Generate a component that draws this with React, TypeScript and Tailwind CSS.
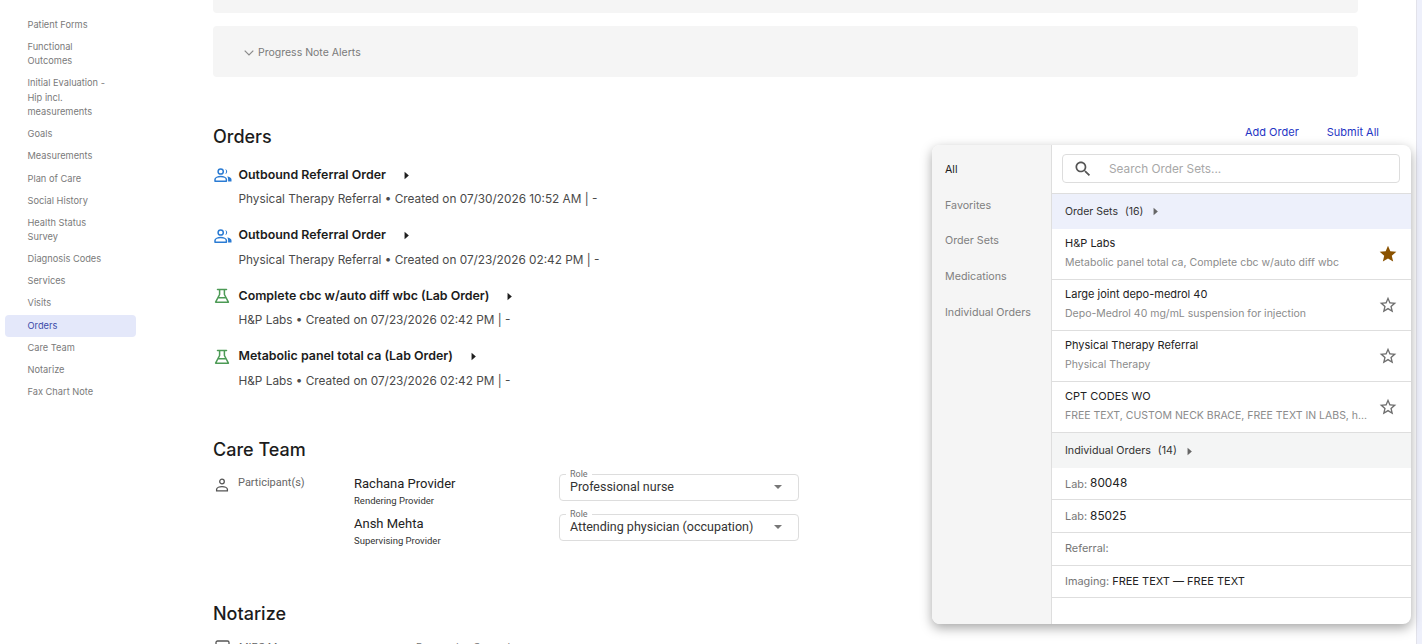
import React from "react";

const font = { fontFamily: "Inter, 'Liberation Sans', sans-serif" };

function PeopleIcon() {
  return (
    <svg width="18" height="14" viewBox="0 0 18 14" fill="none" className="shrink-0">
      <circle cx="6.7" cy="3.5" r="2.6" stroke="#2a7bd3" strokeWidth="1.5" />
      <path d="M1 13.2v-1.600c0-1.900 3-3 5.700-3s5.700 1.100 5.700 3v1.600z" stroke="#2a7bd3" strokeWidth="1.500" strokeLinejoin="round" />
      <path d="M11.200.9a2.700 2.700 0 0 1 0 5.200c.6-.8.9-1.600.9-2.600s-.3-1.800-.9-2.600z" fill="#2a7bd3" />
      <path d="M13.200 8.600c2.100.3 4.300 1.200 4.300 3v1.900h-3.400v-2.300c0-1-.3-1.900-.9-2.600z" fill="#2a7bd3" />
    </svg>
  );
}

function FlaskIcon() {
  return (
    <svg width="16" height="16" viewBox="0 0 16 16" fill="none" className="shrink-0">
      <path d="M3.500 1.500h9M5.600 1.500v5L1.600 14.200h12.800L10.400 6.500V1.500M4 9.800h8" stroke="#4c9a55" strokeWidth="1.500" strokeLinejoin="round" strokeLinecap="round" />
    </svg>
  );
}

function Caret({ color = "#1f1f1f", size = 9 }: { color?: string; size?: number }) {
  return (
    <svg width={size * 0.6} height={size} viewBox="0 0 5 8" className="shrink-0">
      <path d="M0.500 0.500 4.500 4 0.500 7.500z" fill={color} />
    </svg>
  );
}

function StarIcon({ filled }: { filled?: boolean }) {
  return (
    <svg width="20" height="20" viewBox="0 0 24 24" className="shrink-0" fill={filled ? "#8a5200" : "#6f6f6f"}>
      {filled ? (
        <path d="M12 17.270 18.180 21l-1.640-7.030L22 9.240l-7.190-.61L12 2 9.190 8.630 2 9.240l5.460 4.730L5.820 21z" />
      ) : (
        <path d="m22 9.240-7.190-.62L12 2 9.190 8.630 2 9.240l5.460 4.730L5.820 21 12 17.270 18.180 21l-1.630-7.030L22 9.240zM12 15.400l-3.760 2.270 1-4.280-3.320-2.880 4.380-.38L12 6.100l1.710 4.040 4.380.38-3.320 2.880 1 4.280L12 15.400z" />
      )}
    </svg>
  );
}

const navItems: string[][] = [
  ["Patient Forms"],
  ["Functional", "Outcomes"],
  ["Initial Evaluation -", "Hip incl.", "measurements"],
  ["Goals"],
  ["Measurements"],
  ["Plan of Care"],
  ["Social History"],
  ["Health Status", "Survey"],
  ["Diagnosis Codes"],
  ["Services"],
  ["Visits"],
  ["Orders"],
  ["Care Team"],
  ["Notarize"],
  ["Fax Chart Note"],
];

const orders = [
  { title: "Outbound Referral Order", sub: "Physical Therapy Referral • Created on 07/30/2026 10:52 AM | -", icon: "p" },
  { title: "Outbound Referral Order", sub: "Physical Therapy Referral • Created on 07/23/2026 02:42 PM | -", icon: "p" },
  { title: "Complete cbc w/auto diff wbc (Lab Order)", sub: "H&P Labs • Created on 07/23/2026 02:42 PM | -", icon: "f" },
  { title: "Metabolic panel total ca (Lab Order)", sub: "H&P Labs • Created on 07/23/2026 02:42 PM | -", icon: "f" },
];

function Sidebar() {
  return (
    <aside className="w-[213px] shrink-0 pt-[14px] pl-[5px]">
      <div className="w-[131px] flex flex-col">
        {navItems.map((lines) => {
          const active = lines[0] === "Orders";
          return (
            <div
              key={lines[0]}
              className={`pl-[22.500px] py-[3.850px] text-[9.250px] leading-[14.400px] rounded-[4px] ${active ? "bg-[#e4e8fa] text-[#3a4aa8]" : "text-[#7a7a7a]"}`}
            >
              {lines.map((l) => (
                <div key={l}>{l}</div>
              ))}
            </div>
          );
        })}
      </div>
    </aside>
  );
}

function RoleSelect({ value }: { value: string }) {
  return (
    <div className="relative h-[27.500px] w-[240px] shrink-0 border border-[#dddddd] rounded-[4px] flex items-center justify-between pl-[10px] pr-[16px]">
      <span className="absolute -top-[6px] left-[6px] bg-white px-[4px] text-[9px] leading-[11px] text-[#6f6f6f]" style={{ fontFamily: "Roboto, sans-serif" }}>Role</span>
      <span className="text-[12.500px] text-[#333333]" style={{ fontFamily: "Roboto, sans-serif" }}>{value}</span>
      <svg width="8" height="4" viewBox="0 0 8 4"><path d="M0 0h8L4 4z" fill="#777777" /></svg>
    </div>
  );
}

function Provider({ name, role }: { name: string; role: string }) {
  return (
    <div className="h-[40px]" style={{ fontFamily: "Roboto, sans-serif" }}>
      <div className="text-[13px] leading-[18px] text-[#222222]">{name}</div>
      <div className="text-[9.500px] leading-[14px] mt-[1px] text-[#333333]">{role}</div>
    </div>
  );
}

function Main() {
  return (
    <main className="w-[1145px] shrink-0 flex flex-col">
      <div className="h-[13px] shrink-0 bg-[#f5f5f5] rounded-b-[4px]" />
      <div className="mt-[13px] h-[51px] shrink-0 bg-[#f5f5f5] rounded-[4px] flex items-center pl-[31px] pt-[3px] gap-[4px] text-[10.500px] text-[#7a7a7a]">
        <svg width="10" height="6" viewBox="0 0 10 6" fill="none"><path d="M.700.700 5 5l4.300-4.300" stroke="#8a8a8a" strokeWidth="1.200" /></svg>
        <span>Progress Note Alerts</span>
      </div>

      <div className="mt-[47px] shrink-0 flex items-start justify-between">
        <h2 className="text-[18px] leading-[26px] font-medium text-[#1c1c1c]">Orders</h2>
        <div className="flex gap-[28px] text-[11px] leading-[16px] text-[#1f35c4] -mr-[21px]">
          <span>Add Order</span>
          <span>Submit All</span>
        </div>
      </div>

      <div className="mt-[15px] shrink-0 flex flex-col gap-[17.500px]">
        {orders.map((o, i) => (
          <div key={i}>
            <div className="flex items-center h-[20px]">
              <div className="w-[25.500px] flex pl-[1px]">{o.icon === "p" ? <PeopleIcon /> : <FlaskIcon />}</div>
              <span className="text-[12.400px] font-semibold text-[#1c1c1c]">{o.title}</span>
              <span className="ml-[18px] flex"><Caret /></span>
            </div>
            <div className="mt-[5px] pl-[25.500px] text-[11.800px] leading-[18px] text-[#4a4a4a]">{o.sub}</div>
          </div>
        ))}
      </div>

      <h2 className="mt-[47px] shrink-0 text-[18px] leading-[26px] font-medium text-[#1c1c1c]">Care Team</h2>

      <div className="mt-[11px] flex items-start h-[73px] shrink-0">
        <div className="w-[141px] mt-[2px] flex items-center gap-[9px] h-[16px] pl-[2px]" style={{ fontFamily: "Roboto, sans-serif" }}>
          <svg width="14" height="14" viewBox="0 0 14 14" fill="none" className="shrink-0 mt-[2px]">
            <circle cx="7" cy="3.500" r="2.300" stroke="#555555" strokeWidth="1.300" />
            <path d="M1.600 12.800v-1.500c0-1.700 3-2.700 5.400-2.700s5.400 1 5.400 2.700v1.500z" stroke="#555555" strokeWidth="1.300" />
          </svg>
          <span className="text-[11px] text-[#666666]">Participant(s)</span>
        </div>
        <div className="w-[205px] pt-[1px]">
          <Provider name="Rachana Provider" role="Rendering Provider" />
          <Provider name="Ansh Mehta" role="Supervising Provider" />
        </div>
        <div className="flex flex-col gap-[12.500px]">
          <RoleSelect value="Professional nurse" />
          <RoleSelect value="Attending physician (occupation)" />
        </div>
      </div>

      <h2 className="mt-[54px] shrink-0 text-[18px] leading-[26px] font-medium text-[#1c1c1c]">Notarize</h2>
      <div className="mt-[13px] flex items-start h-[20px] shrink-0 overflow-hidden" style={{ fontFamily: "Roboto, sans-serif" }}>
        <div className="w-[203px] flex items-center gap-[9px] pl-[2px]">
          <svg width="15" height="15" viewBox="0 0 15 15" fill="none" className="shrink-0"><rect x="1" y="1" width="13" height="13" rx="1.500" stroke="#555555" strokeWidth="1.300" /></svg>
          <span className="text-[11px] text-[#666666]">MIPS M</span>
        </div>
        <span className="text-[11px] text-[#777777]">Depression Screening</span>
      </div>
    </main>
  );
}

function SetRow({ title, sub, fav }: { title: string; sub: string; fav?: boolean }) {
  return (
    <div className="h-[51px] shrink-0 border-b border-[#dedede] flex items-center pl-[13px] pr-[13px]">
      <div className="flex-1 min-w-0 pr-[10px]">
        <div className="-mt-[1px] text-[11px] leading-[16px] text-[#222222] truncate">{title}</div>
        <div className="mt-[4.500px] text-[10.500px] leading-[16px] text-[#8b8b8b] truncate">{sub}</div>
      </div>
      <StarIcon filled={fav} />
    </div>
  );
}

function PlainRow({ label, value, h, big }: { label: string; value?: string; h: string; big?: boolean }) {
  return (
    <div className={`${h} shrink-0 border-b border-[#dedede] flex items-center pl-[13px] text-[10.900px] ${big ? "pt-[2px]" : ""}`}>
      <span className="text-[#767676]">{label}</span>
      {value ? <span className={`ml-[3px] text-[#222222] ${big ? "text-[11.800px]" : "text-[11px]"}`}>{value}</span> : null}
    </div>
  );
}

function Popover() {
  return (
    <div className="absolute left-[932px] top-[145px] w-[479px] h-[479px] bg-white rounded-[8px] overflow-hidden flex shadow-[0_4px_12px_rgba(0,0,0,0.35)]">
      <div className="w-[120px] shrink-0 bg-[#f5f5f5] border-r border-[#dedede] pl-[13px] pt-[17px] flex flex-col gap-[19.700px] text-[10.700px] leading-[16px] text-[#808080]">
        <div className="text-[#1c1c1c]">All</div>
        <div>Favorites</div>
        <div>Order Sets</div>
        <div>Medications</div>
        <div>Individual Orders</div>
      </div>
      <div className="flex-1 flex flex-col min-w-0">
        <div className="h-[48.500px] shrink-0 border-b border-[#dedede] pl-[10px] pr-[11px] pt-[9px]">
          <div className="h-[29px] border border-[#dddddd] rounded-[4px] flex items-center pl-[10px] gap-[16px]">
            <svg width="20" height="20" viewBox="0 0 24 24" className="shrink-0"><path fill="#555555" d="M15.500 14h-.79l-.28-.27C15.410 12.590 16 11.110 16 9.500 16 5.910 13.090 3 9.500 3S3 5.910 3 9.500 5.910 16 9.500 16c1.610 0 3.090-.59 4.230-1.570l.27.28v.79l5 4.990L20.490 19l-4.990-5zm-6 0C7.010 14 5 11.990 5 9.500S7.010 5 9.500 5 14 7.010 14 9.500 11.990 14 9.500 14z" /></svg>
            <span className="text-[11.800px] text-[#a8a8a8] pt-[2px]">Search Order Sets...</span>
          </div>
        </div>
        <div className="h-[35px] shrink-0 bg-[#edf0fb] flex items-center pl-[13px] pt-[1px] text-[10.500px] text-[#333333]">
          <span>Order Sets</span>
          <span className="ml-[7px]">(16)</span>
          <span className="ml-[10px] flex"><Caret color="#666666" /></span>
        </div>
        <SetRow title="H&P Labs" sub="Metabolic panel total ca, Complete cbc w/auto diff wbc" fav />
        <SetRow title="Large joint depo-medrol 40" sub="Depo-Medrol 40 mg/mL suspension for injection" />
        <SetRow title="Physical Therapy Referral" sub="Physical Therapy" />
        <SetRow title="CPT CODES WO" sub="FREE TEXT, CUSTOM NECK BRACE, FREE TEXT IN LABS, h..." />
        <div className="h-[35px] shrink-0 bg-[#f4f5f5] flex items-center pl-[13px] pt-[2px] text-[10.700px] text-[#333333]">
          <span>Individual Orders</span>
          <span className="ml-[7px]">(14)</span>
          <span className="ml-[10px] flex"><Caret color="#666666" /></span>
        </div>
        <PlainRow label="Lab:" value="80048" h="h-[32px]" big />
        <PlainRow label="Lab:" value="85025" h="h-[33px]" big />
        <PlainRow label="Referral:" h="h-[33px]" />
        <PlainRow label="Imaging:" value="FREE TEXT — FREE TEXT" h="h-[32px]" />
      </div>
    </div>
  );
}

export default function App() {
  return (
    <div className="relative h-[644px] w-[1422px] overflow-hidden bg-white flex" style={font}>
      <Sidebar />
      <Main />
      <div className="ml-auto w-[6px] h-full bg-[#eef0fb] border-l border-[#e2e2ea]" />
      <Popover />
    </div>
  );
}
